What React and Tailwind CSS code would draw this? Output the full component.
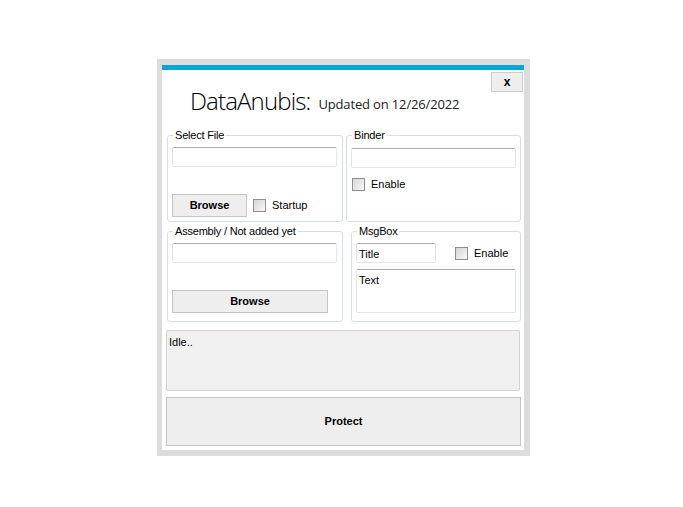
import React, { useState } from "react";

const ui = { fontFamily: '"Liberation Sans", Arial, sans-serif' };
const thin = { fontFamily: '"Open Sans", "Noto Sans", sans-serif' };

const TextBox = ({ className = "", value = "" }) => (
  <div
    className={`border border-[#e1e6ec] border-t-[#a9a9a9] rounded-[2px] bg-white px-[2px] pt-[2px] text-[11px] text-black ${className}`}
  >
    {value}
  </div>
);

const CheckBox = ({ label, checked, onChange, className = "" }) => (
  <label className={`flex items-center cursor-default ${className}`}>
    <span
      onClick={onChange}
      className="w-[13px] h-[13px] border border-[#8f8f8f] bg-gradient-to-br from-[#d6d6d6] to-[#f8f8f8] flex items-center justify-center text-[10px] leading-none"
    >
      {checked ? "✓" : ""}
    </span>
    <span className="ml-[6px] text-[11px] text-black">{label}</span>
  </label>
);

const Group = ({ title, className = "", children }) => (
  <div className={`relative border border-[#d5dfe5] rounded-[3px] ${className}`}>
    <span className="absolute -top-[8px] left-[5px] bg-white px-[2px] text-[11px] leading-[14px] tracking-[-0.2px] text-black">
      {title}
    </span>
    {children}
  </div>
);

const Button = ({ className = "", children }) => (
  <button
    className={`border border-[#c5c5c5] bg-[#eeeeee] text-[11px] font-bold text-black ${className}`}
  >
    {children}
  </button>
);

export default function App() {
  const [startup, setStartup] = useState(false);
  const [binder, setBinder] = useState(false);
  const [msg, setMsg] = useState(false);

  return (
    <div className="min-h-[507px] bg-white pl-[157px] pt-[59px]" style={ui}>
      <div className="w-[373px] h-[397px] border-[#dcdcdc] border-t-[6px] border-l-[5px] border-r-[6px] border-b-[6px] bg-white flex flex-col">
        <div className="h-[5px] bg-[#00a8d8]" />

        <div className="relative h-[65px]">
          <button className="absolute top-[2px] right-[1px] w-[32px] h-[20px] bg-[#eeeeee] border border-[#cccccc] text-[12px] font-bold text-black leading-none">
            x
          </button>
          <div className="flex items-start pl-[28px] pt-[15px]" style={thin}>
            <span className="text-[24px] leading-[32px] font-light text-black tracking-[-0.85px]">
              DataAnubis:
            </span>
            <span className="ml-[8px] mt-[9px] text-[13px] leading-[20px] tracking-[-0.15px] text-[#1a1a1a]">
              Updated on 12/26/2022
            </span>
          </div>
        </div>

        <div className="flex pl-[5px] gap-[3px]">
          <Group title="Select File" className="w-[176px] h-[87px]">
            <TextBox className="ml-[4px] mt-[11px] w-[165px] h-[20px]" />
            <div className="flex items-center ml-[4px] mt-[27px]">
              <Button className="w-[75px] h-[23px]">Browse</Button>
              <CheckBox
                label="Startup"
                checked={startup}
                onChange={() => setStartup(!startup)}
                className="ml-[6px]"
              />
            </div>
          </Group>
          <Group title="Binder" className="w-[175px] h-[87px]">
            <TextBox className="ml-[4px] mt-[12px] w-[165px] h-[20px]" />
            <CheckBox
              label="Enable"
              checked={binder}
              onChange={() => setBinder(!binder)}
              className="ml-[5px] mt-[8px]"
            />
          </Group>
        </div>

        <div className="flex pl-[5px] gap-[8px] mt-[9px]">
          <Group title="Assembly / Not added yet" className="w-[176px] h-[91px]">
            <TextBox className="ml-[4px] mt-[11px] w-[165px] h-[20px]" />
            <Button className="ml-[4px] mt-[27px] w-[156px] h-[23px]">Browse</Button>
          </Group>
          <Group title="MsgBox" className="w-[170px] h-[91px]">
            <div className="flex items-center ml-[4px] mt-[11px]">
              <TextBox value="Title" className="w-[80px] h-[20px]" />
              <CheckBox
                label="Enable"
                checked={msg}
                onChange={() => setMsg(!msg)}
                className="ml-[19px]"
              />
            </div>
            <TextBox value="Text" className="ml-[4px] mt-[6px] w-[160px] h-[44px]" />
          </Group>
        </div>

        <div className="ml-[4px] mt-[8px] w-[354px] h-[61px] bg-[#f0f0f0] border border-[#d2d2d2] rounded-[2px] px-[2px] pt-[3px] text-[11px] text-black">
          Idle..
        </div>

        <Button className="ml-[4px] mt-[6px] w-[355px] h-[49px]">Protect</Button>
      </div>
    </div>
  );
}
